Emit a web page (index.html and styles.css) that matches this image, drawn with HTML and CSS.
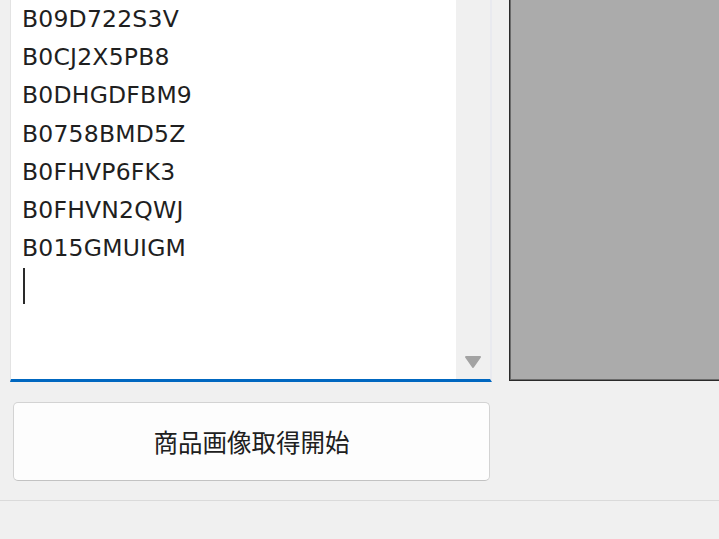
FILE: index.html
```html
<!DOCTYPE html>
<html lang="ja">
<head>
<meta charset="utf-8">
<title>商品画像取得</title>
<link rel="stylesheet" href="styles.css">
</head>
<body>
<div class="main">
  <div class="editor">
    <div class="text-area">
      <div class="line">B09D722S3V</div>
      <div class="line">B0CJ2X5PB8</div>
      <div class="line">B0DHGDFBM9</div>
      <div class="line">B0758BMD5Z</div>
      <div class="line">B0FHVP6FK3</div>
      <div class="line">B0FHVN2QWJ</div>
      <div class="line">B015GMUIGM</div>
      <div class="line"><span class="caret"></span></div>
    </div>
    <div class="scrollbar">
      <svg class="arrow" width="18" height="14" viewBox="0 0 18 14"><path d="M2 2 H16 L9 12 Z" fill="#a3a3a3" stroke="#a3a3a3" stroke-width="2" stroke-linejoin="round"/></svg>
    </div>
  </div>
  <div class="preview"></div>
</div>
<div class="actions">
  <button class="start-btn" type="button">商品画像取得開始</button>
</div>
<div class="statusbar"></div>
</body>
</html>
```
FILE: styles.css
```css
html, body {
  margin: 0;
  padding: 0;
}
body {
  background: #f0f0f0;
  width: 719px;
  height: 539px;
  overflow: hidden;
  font-family: "DejaVu Sans", "Noto Sans CJK JP", sans-serif;
}
.main {
  display: flex;
  height: 382px;
}
.editor {
  margin-left: 10px;
  width: 479px;
  height: 379px;
  display: flex;
  border-left: 1px solid #e3e3e3;
  border-right: 2px solid #e9eaef;
  border-bottom: 3px solid #0067c0;
}
.text-area {
  flex: 1;
  background: #ffffff;
  padding-left: 11px;
  overflow: hidden;
}
.line {
  font-size: 23.5px;
  line-height: 38.2px;
  height: 38.2px;
  color: #1f1f1f;
  white-space: nowrap;
  letter-spacing: 0.2px;
}
.caret {
  display: inline-block;
  width: 2px;
  height: 36px;
  background: #2a2a2a;
  vertical-align: top;
  margin-left: 1px;
  margin-top: 1px;
}
.scrollbar {
  width: 34px;
  background: #f0f0f0;
  display: flex;
  align-items: flex-end;
  justify-content: center;
  padding-bottom: 10px;
  box-sizing: border-box;
}
.arrow {
  display: block;
}
.preview {
  margin-left: 17px;
  flex: 1;
  height: 380px;
  background: #ababab;
  border-left: 1px solid #2a2a2a;
  border-bottom: 1px solid #2a2a2a;
  box-shadow: inset 1px -1px 0 #6a6a6a;
}
.actions {
  padding: 20px 0 0 13px;
  height: 118px;
  box-sizing: border-box;
}
.start-btn {
  width: 477px;
  height: 79px;
  background: #fdfdfd;
  border: 1px solid #d3d3d3;
  border-bottom-color: #c2c2c2;
  border-radius: 5px;
  font-family: "Noto Sans CJK JP", sans-serif;
  font-size: 24.5px;
  color: #202020;
  padding: 0;
  margin: 0;
  display: block;
}
.statusbar {
  border-top: 1px solid #dadada;
  height: 38px;
  background: #f0f0f0;
}
```
